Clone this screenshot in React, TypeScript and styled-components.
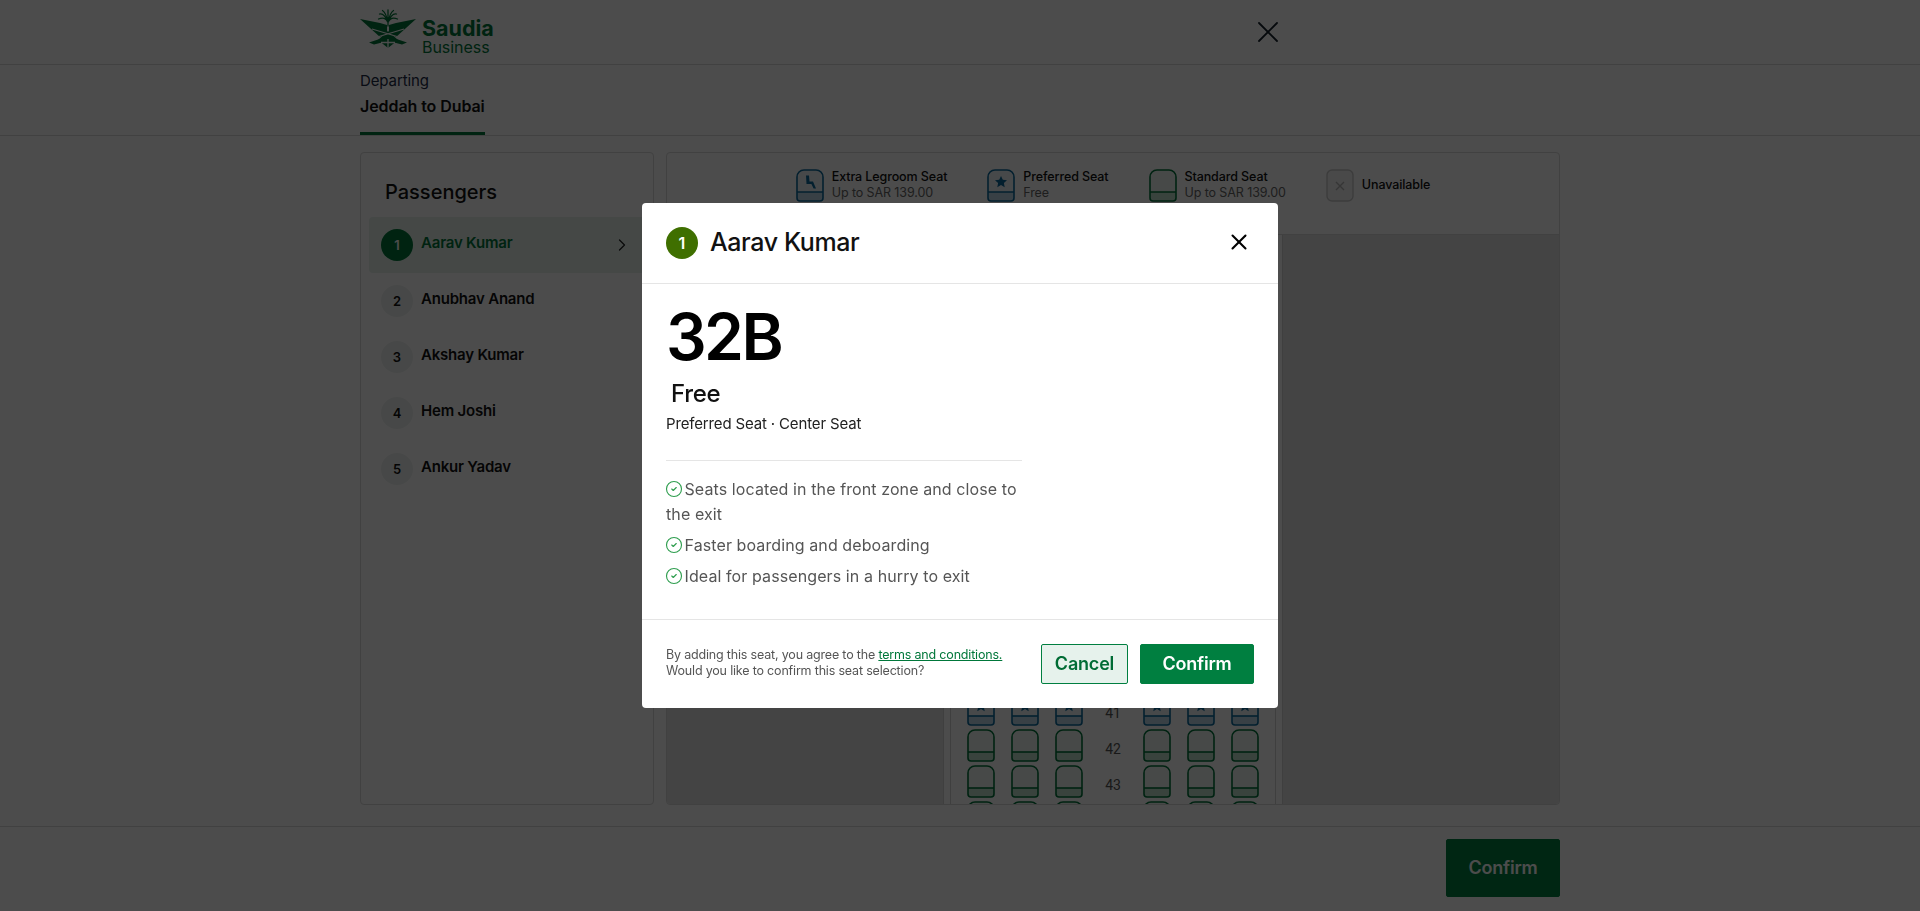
import React from 'react';
import styled, { createGlobalStyle } from 'styled-components';
import { ChevronRight, CircleCheck, X } from 'lucide-react';

const GlobalStyle = createGlobalStyle`
  html, body {
    margin: 0;
    height: 100%;
    overflow: hidden;
    background: #fff;
    font-family: Inter, "Liberation Sans", sans-serif;
    color: #111;
  }
  * {
    box-sizing: border-box;
  }
`;

const Page = styled.div`
  height: 911px;
  display: flex;
  flex-direction: column;
`;

const TopBar = styled.header`
  height: 65px;
  flex: none;
  border-bottom: 1px solid #d9d9d9;
`;

const TopBarInner = styled.div`
  width: 1200px;
  height: 100%;
  margin: 0 auto;
  padding-right: 274px;
  display: flex;
  align-items: center;
  justify-content: space-between;
`;

const LogoWrap = styled.div`
  display: flex;
  align-items: center;
  gap: 6px;
  color: #00773a;
`;

const LogoMark = styled.svg`
  margin-top: -6px;
`;

const LogoText = styled.div`
  display: flex;
  flex-direction: column;
  margin-top: 8px;
`;

const LogoName = styled.span`
  font-size: 21.5px;
  line-height: 23px;
  font-weight: 700;
`;

const LogoSub = styled.span`
  font-size: 16px;
  line-height: 15px;
  font-weight: 400;
  letter-spacing: -0.05px;
`;

const IconButton = styled.button`
  display: flex;
  padding: 0;
  border: 0;
  background: none;
  color: #14202b;
`;

const TabBar = styled.nav`
  height: 71px;
  flex: none;
  border-bottom: 1px solid #d9d9d9;
`;

const TabBarInner = styled.div`
  width: 1200px;
  height: 70px;
  margin: 0 auto;
`;

const Tab = styled.div`
  width: fit-content;
  height: 70px;
  padding-top: 6px;
  border-bottom: 3px solid #00773a;
`;

const TabLabel = styled.div`
  font-size: 15px;
  line-height: 20px;
  color: #1b2b45;
  letter-spacing: -0.1px;
`;

const TabTitle = styled.div`
  margin-top: 4px;
  font-size: 16px;
  line-height: 22px;
  font-weight: 600;
  letter-spacing: -0.08px;
`;

const Main = styled.main`
  flex: 1;
  min-height: 0;
  width: 1200px;
  margin: 0 auto;
  padding: 16px 0 21px;
  display: flex;
  gap: 12px;
`;

const PassengerPanel = styled.aside`
  width: 294px;
  flex: none;
  padding: 23px 8px 0;
  border: 1px solid #d9d9d9;
  border-radius: 4px;
`;

const PanelTitle = styled.h2`
  margin: 0 0 9px 16px;
  font-size: 20px;
  line-height: 32px;
  font-weight: 500;
`;

const PassengerRow = styled.div<{ $active?: boolean }>`
  height: 56px;
  padding: 0 13px 0 12px;
  display: flex;
  align-items: center;
  gap: 8px;
  border-radius: 4px;
  background: ${(p) => (p.$active ? '#e6f2ec' : 'transparent')};
  color: ${(p) => (p.$active ? '#00773a' : '#111')};
`;

const RowBadge = styled.span<{ $active?: boolean }>`
  width: 32px;
  height: 32px;
  flex: none;
  display: flex;
  align-items: center;
  justify-content: center;
  border-radius: 50%;
  font-size: 13px;
  font-weight: 600;
  background: ${(p) => (p.$active ? '#00773a' : '#eef2f0')};
  color: ${(p) => (p.$active ? '#fff' : '#111')};
`;

const RowName = styled.span`
  flex: 1;
  margin-bottom: 6px;
  font-size: 15px;
  font-weight: 600;
  letter-spacing: -0.2px;
`;

const SeatPanel = styled.section`
  flex: 1;
  min-width: 0;
  display: flex;
  flex-direction: column;
  border: 1px solid #d9d9d9;
  border-radius: 4px;
  overflow: hidden;
`;

const Legend = styled.div`
  height: 82px;
  flex: none;
  padding-top: 16px;
  display: flex;
  justify-content: center;
  gap: 40px;
  border-bottom: 1px solid #d9d9d9;
`;

const LegendItem = styled.div`
  display: flex;
  height: 33px;
  align-items: center;
  gap: 8px;
`;

const LegendText = styled.div`
  margin-bottom: 2px;
  font-size: 12.5px;
  line-height: 16px;
  font-weight: 500;
  letter-spacing: -0.1px;
`;

const LegendSub = styled.div`
  color: #666;
  font-weight: 400;
`;

const Cabin = styled.div`
  flex: 1;
  min-height: 0;
  display: flex;
  justify-content: center;
  background: #e4e4e4;
`;

const Fuselage = styled.div`
  width: 340px;
  padding: 0 6px;
  background: #fff;
  border-left: 1px solid #d4d4d4;
  border-right: 1px solid #d4d4d4;
`;

const SeatMap = styled.div`
  height: 100%;
  padding: 26px 0 0 16px;
  display: flex;
  flex-direction: column;
  gap: 3px;
  overflow: hidden;
  border-left: 1px solid #d4d4d4;
  border-right: 1px solid #d4d4d4;
`;

const SeatRow = styled.div`
  display: flex;
  flex: none;
  height: 33px;
`;

const SeatGroup = styled.div`
  display: flex;
  gap: 16px;
`;

const RowNumber = styled.span`
  width: 60px;
  padding-top: 6px;
  display: flex;
  align-items: center;
  justify-content: center;
  font-family: Roboto, sans-serif;
  font-size: 14px;
  color: #555;
`;

const PageFooter = styled.footer`
  height: 85px;
  flex: none;
  padding-bottom: 2px;
  border-top: 1px solid #d9d9d9;
`;

const PageFooterInner = styled.div`
  width: 1200px;
  height: 100%;
  margin: 0 auto;
  display: flex;
  justify-content: flex-end;
  align-items: center;
`;

const ActionButton = styled.button<{ $outline?: boolean; $large?: boolean }>`
  height: ${(p) => (p.$large ? '58px' : '40px')};
  width: ${(p) => (p.$outline ? '87px' : '114px')};
  padding: 0 0 2px;
  font-family: inherit;
  font-size: 18px;
  font-weight: 600;
  letter-spacing: -0.2px;
  border-radius: 2px;
  border: 1px solid #007f40;
  background: ${(p) => (p.$outline ? '#e6f2ec' : '#007f40')};
  color: ${(p) => (p.$outline ? '#006c35' : '#fff')};
`;

const Overlay = styled.div`
  position: fixed;
  inset: 0;
  display: flex;
  align-items: center;
  justify-content: center;
  background: rgba(0, 0, 0, 0.7);
`;

const Modal = styled.div`
  width: 636px;
  height: 505px;
  display: flex;
  flex-direction: column;
  background: #fff;
  border-radius: 4px;
`;

const ModalHeader = styled.div`
  height: 81px;
  flex: none;
  padding: 0 24px;
  display: flex;
  align-items: center;
  gap: 12px;
  border-bottom: 1px solid #e5e5e5;
`;

const ModalBadge = styled.span`
  width: 32px;
  height: 32px;
  display: flex;
  align-items: center;
  justify-content: center;
  border-radius: 50%;
  background: #3f6f00;
  color: #fff;
  font-size: 16px;
  font-weight: 600;
`;

const ModalName = styled.h3`
  flex: 1;
  margin: 0 0 3px;
  font-size: 25px;
  font-weight: 500;
  letter-spacing: -0.4px;
  color: #111;
`;

const CloseButton = styled(IconButton)`
  margin: 0 2px 2px 0;
  color: #000;
`;

const ModalBody = styled.div`
  flex: 1;
  min-height: 0;
  padding: 15px 24px 0;
`;

const SeatCode = styled.div`
  font-size: 64px;
  line-height: 76px;
  font-weight: 600;
  letter-spacing: -2.6px;
  color: #000;
`;

const Price = styled.div`
  margin: 3px 0 0 5px;
  font-size: 24px;
  line-height: 32px;
  font-weight: 500;
  letter-spacing: -0.3px;
`;

const SeatType = styled.div`
  margin-top: 3px;
  font-size: 15px;
  line-height: 22px;
  letter-spacing: -0.15px;
  color: #222;
`;

const Benefits = styled.ul`
  width: 356px;
  margin: 25px 0 0;
  padding: 16px 0 0;
  list-style: none;
  display: flex;
  flex-direction: column;
  gap: 6px;
  border-top: 1px solid #e5e5e5;
  font-size: 16px;
  line-height: 25px;
  letter-spacing: 0.1px;
  color: #555;
`;

const CheckIcon = styled(CircleCheck)`
  margin: 0 2px 0 -1.5px;
  vertical-align: -3px;
  color: #2f9e4f;
`;

const ModalFooter = styled.div`
  height: 89px;
  flex: none;
  padding: 0 24px;
  display: flex;
  align-items: center;
  gap: 12px;
  border-top: 1px solid #e5e5e5;
`;

const Agreement = styled.p`
  flex: 1;
  margin: 0 0 2px;
  font-size: 12.5px;
  line-height: 16px;
  letter-spacing: -0.18px;
  color: #555;
`;

const TermsLink = styled.a`
  color: #00773a;
  text-decoration: underline;
`;

type SeatKind = 'legroom' | 'preferred' | 'standard';

const seatColours: Record<SeatKind, { line: string; top: string; band: string }> = {
  legroom: { line: '#0b6a9c', top: '#eef4f8', band: '#bcd8e8' },
  preferred: { line: '#0b6a9c', top: '#eef4f8', band: '#bcd8e8' },
  standard: { line: '#00733a', top: '#edf5f0', band: '#bfe0cc' },
};

const Seat = ({ kind }: { kind: SeatKind }) => {
  const c = seatColours[kind];
  return (
    <svg width="28" height="33" viewBox="0 0 28 33" fill="none">
      <path d="M1 8a7 7 0 0 1 7-7h12a7 7 0 0 1 7 7v15H1z" fill={c.top} />
      <path d="M1 23h26v6a3 3 0 0 1-3 3H4a3 3 0 0 1-3-3z" fill={c.band} />
      <path
        d="M1 8a7 7 0 0 1 7-7h12a7 7 0 0 1 7 7v21a3 3 0 0 1-3 3H4a3 3 0 0 1-3-3z"
        stroke={c.line}
        strokeWidth="1.6"
      />
      <path d="M1 23h26" stroke={c.line} strokeWidth="1.6" />
      {kind === 'preferred' && (
        <path d="M14 7l1.800 3.800 4.200.5-3.100 2.800.8 4.100-3.700-2.100-3.700 2.100.8-4.100L8 11.300l4.200-.5z" fill={c.line} />
      )}
      {kind === 'legroom' && (
        <path d="M10 6.500h3l.5 6h3.500l3 7h-2.400l-2.200-4.500H10.500z" fill={c.line} />
      )}
    </svg>
  );
};

const UnavailableSeat = () => (
  <svg width="28" height="33" viewBox="0 0 28 33" fill="none">
    <rect x="1" y="1" width="26" height="31" rx="5" stroke="#c9c9c9" strokeWidth="1.4" fill="#f4f4f4" />
    <path d="M10 13l8 8M18 13l-8 8" stroke="#b5b5b5" strokeWidth="1.4" />
  </svg>
);

const SaudiaMark = () => (
  <LogoMark width="56" height="40" viewBox="0 0 56 40" fill="currentColor">
    <path d="M0 10l20 4 7 2v8l-7 4z" />
    <path d="M56 10l-20 4-7 2v8l7 4z" />
    <path d="M28 22l10 9-10 8-10-8z" />
    <path d="M9 33.500l12-4 3 3.500-10 2.500z" />
    <path d="M47 33.500l-12-4-3 3.500 10 2.500z" />
    <g stroke="#fff" strokeWidth="1.300" fill="none">
      <path d="M12 20l30 9M44 20l-30 9M28 30v9M21 33.500h14" />
    </g>
    <g stroke="currentColor" strokeWidth="1.300" strokeLinecap="round" fill="none">
      <path d="M28 17V12.500M28 13.500C26 9 23 8 18.500 10M28 13.500C25.500 7 23 4 19.500 5M28 13.500C26.500 6 25 3 22.500 1.500M28 13.500V0.800M28 13.500C29.500 6 31 3 33.500 1.500M28 13.500C30.500 7 33 4 36.500 5M28 13.500C30 9 33 8 37.500 10" />
    </g>
  </LogoMark>
);

const legendItems: { kind: SeatKind; label: string; sub: string }[] = [
  { kind: 'legroom', label: 'Extra Legroom Seat', sub: 'Up to SAR 139.00' },
  { kind: 'preferred', label: 'Preferred Seat', sub: 'Free' },
  { kind: 'standard', label: 'Standard Seat', sub: 'Up to SAR 139.00' },
];

const passengers = ['Aarav Kumar', 'Anubhav Anand', 'Akshay Kumar', 'Hem Joshi', 'Ankur Yadav'];

const benefits = [
  'Seats located in the front zone and close to the exit',
  'Faster boarding and deboarding',
  'Ideal for passengers in a hurry to exit',
];

const rows = Array.from({ length: 16 }, (_, i) => 29 + i);

const SeatGroupOf = ({ kind }: { kind: SeatKind }) => (
  <SeatGroup>
    <Seat kind={kind} />
    <Seat kind={kind} />
    <Seat kind={kind} />
  </SeatGroup>
);

export default function App() {
  return (
    <>
      <GlobalStyle />
      <Page>
        <TopBar>
          <TopBarInner>
            <LogoWrap>
              <SaudiaMark />
              <LogoText>
                <LogoName>Saudia</LogoName>
                <LogoSub>Business</LogoSub>
              </LogoText>
            </LogoWrap>
            <IconButton aria-label="Close">
              <X size={36} strokeWidth={1.2} />
            </IconButton>
          </TopBarInner>
        </TopBar>
        <TabBar>
          <TabBarInner>
            <Tab>
              <TabLabel>Departing</TabLabel>
              <TabTitle>Jeddah to Dubai</TabTitle>
            </Tab>
          </TabBarInner>
        </TabBar>
        <Main>
          <PassengerPanel>
            <PanelTitle>Passengers</PanelTitle>
            {passengers.map((name, i) => (
              <PassengerRow key={name} $active={i === 0}>
                <RowBadge $active={i === 0}>{i + 1}</RowBadge>
                <RowName>{name}</RowName>
                {i === 0 && <ChevronRight size={20} strokeWidth={1.5} color="#222" />}
              </PassengerRow>
            ))}
          </PassengerPanel>
          <SeatPanel>
            <Legend>
              {legendItems.map((item) => (
                <LegendItem key={item.label}>
                  <Seat kind={item.kind} />
                  <LegendText>
                    {item.label}
                    <LegendSub>{item.sub}</LegendSub>
                  </LegendText>
                </LegendItem>
              ))}
              <LegendItem>
                <UnavailableSeat />
                <LegendText>Unavailable</LegendText>
              </LegendItem>
            </Legend>
            <Cabin>
              <Fuselage>
                <SeatMap>
                  {rows.map((row) => {
                    const kind: SeatKind = row <= 41 ? 'preferred' : 'standard';
                    return (
                      <SeatRow key={row}>
                        <SeatGroupOf kind={kind} />
                        <RowNumber>{row}</RowNumber>
                        <SeatGroupOf kind={kind} />
                      </SeatRow>
                    );
                  })}
                </SeatMap>
              </Fuselage>
            </Cabin>
          </SeatPanel>
        </Main>
        <PageFooter>
          <PageFooterInner>
            <ActionButton $large>Confirm</ActionButton>
          </PageFooterInner>
        </PageFooter>
      </Page>
      <Overlay>
        <Modal>
          <ModalHeader>
            <ModalBadge>1</ModalBadge>
            <ModalName>Aarav Kumar</ModalName>
            <CloseButton aria-label="Close">
              <X size={26} strokeWidth={1.9} />
            </CloseButton>
          </ModalHeader>
          <ModalBody>
            <SeatCode>32B</SeatCode>
            <Price>Free</Price>
            <SeatType>Preferred Seat · Center Seat</SeatType>
            <Benefits>
              {benefits.map((text) => (
                <li key={text}>
                  <CheckIcon size={18} strokeWidth={1.5} />
                  {text}
                </li>
              ))}
            </Benefits>
          </ModalBody>
          <ModalFooter>
            <Agreement>
              By adding this seat, you agree to the <TermsLink href="#">terms and conditions.</TermsLink>
              <br />
              Would you like to confirm this seat selection?
            </Agreement>
            <ActionButton $outline>Cancel</ActionButton>
            <ActionButton>Confirm</ActionButton>
          </ModalFooter>
        </Modal>
      </Overlay>
    </>
  );
}
